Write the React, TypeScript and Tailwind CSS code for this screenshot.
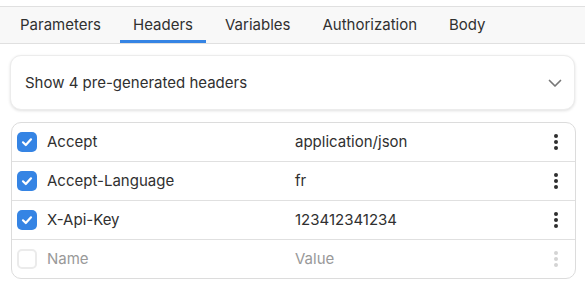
import React from "react";

const Check = ({ on }: { on: boolean }) =>
  on ? (
    <div className="w-[20px] h-[20px] rounded-[5px] bg-[#3584e4] flex items-center justify-center shrink-0">
      <svg width="14" height="14" viewBox="0 0 14 14" fill="none">
        <path d="M3 7.3 L5.8 10 L11 4.3" stroke="white" strokeWidth="2.2" strokeLinecap="round" strokeLinejoin="round" />
      </svg>
    </div>
  ) : (
    <div className="w-[20px] h-[20px] rounded-[5px] border-2 border-[#ebebeb] bg-white shrink-0" />
  );

const Kebab = ({ dim }: { dim?: boolean }) => (
  <svg width="6" height="18" viewBox="0 0 6 18" className="shrink-0">
    <circle cx="3" cy="3" r="2" fill={dim ? "#d4d4d4" : "#2e2e2e"} />
    <circle cx="3" cy="9" r="2" fill={dim ? "#d4d4d4" : "#2e2e2e"} />
    <circle cx="3" cy="15" r="2" fill={dim ? "#d4d4d4" : "#2e2e2e"} />
  </svg>
);

const rows = [
  { name: "Accept", value: "application/json", on: true },
  { name: "Accept-Language", value: "fr", on: true },
  { name: "X-Api-Key", value: "123412341234", on: true },
];

export default function App() {
  const tabs = ["Parameters", "Headers", "Variables", "Authorization", "Body"];
  return (
    <div className="w-[585px] h-[295px] bg-white font-['Inter',sans-serif] text-[15px] text-[#303030] overflow-hidden">
      <div className="h-[6px]" />
      <div className="flex h-[38px] border-y border-[#e0e0e0] bg-[#f8f8f8] pl-[7px] gap-[6px]">
        {tabs.map((t) => (
          <div
            key={t}
            className={
              "px-[13px] flex items-center h-full border-b-[3px] " +
              (t === "Headers" ? "border-[#3584e4]" : "border-transparent")
            }
          >
            <span className="pt-[4px]">{t}</span>
          </div>
        ))}
      </div>
      <div className="mx-[10px] mt-[11px] h-[55px] rounded-[11px] border border-[#ececec] bg-white shadow-[0_1px_3px_rgba(0,0,0,0.12)] flex items-center pl-[14px] pr-[12px] justify-between">
        <span className="pt-[2px]">Show 4 pre-generated headers</span>
        <svg width="14" height="14" viewBox="0 0 14 14" fill="none">
          <path d="M1.5 4.5 L7 10 L12.5 4.5" stroke="#777" strokeWidth="1.7" strokeLinecap="round" strokeLinejoin="round" />
        </svg>
      </div>
      <div className="ml-[11px] mr-[9px] mt-[12px] rounded-[10px] border border-[#dcdcdc] bg-white overflow-hidden">
        {rows.map((r) => (
          <div key={r.name} className="h-[39px] flex items-center border-b border-[#e0e0e0] pl-[5px] pr-[16px]">
            <Check on={r.on} />
            <span className="ml-[10px] w-[248px]">{r.name}</span>
            <span className="flex-1">{r.value}</span>
            <Kebab />
          </div>
        ))}
        <div className="h-[38px] flex items-center pl-[5px] pr-[16px]">
          <Check on={false} />
          <span className="ml-[10px] w-[248px] text-[#999]">Name</span>
          <span className="flex-1 text-[#999]">Value</span>
          <Kebab dim />
        </div>
      </div>
    </div>
  );
}
